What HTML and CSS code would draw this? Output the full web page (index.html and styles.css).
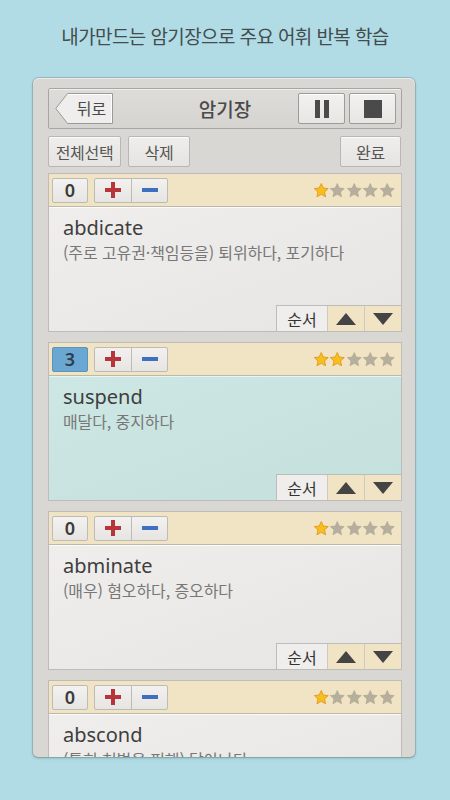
FILE: index.html
```html
<!DOCTYPE html>
<html lang="ko">
<head>
<meta charset="utf-8">
<title>암기장</title>
<link rel="stylesheet" href="styles.css">
</head>
<body>
<div class="screen">
  <h1 class="headline">내가만드는 암기장으로 주요 어휘 반복 학습</h1>
  <div class="panel">
    <div class="topbar">
      <button class="back">
        <svg class="back-shape" viewBox="0 0 58 31" preserveAspectRatio="none"><path d="M12.5 0.5H57.5V30.5H12.5L0.8 15.5Z" fill="#efeeec" stroke="#9a9a9a"/><path d="M13 1.5H56.5V29.5" fill="none" stroke="#ffffff" stroke-width="1"/></svg>
        <span class="back-label">뒤로</span>
      </button>
      <div class="topbar-title">암기장</div>
      <div class="controls">
        <button class="ctl"><svg width="16" height="20" viewBox="0 0 16 20"><rect x="1" y="1" width="5" height="18" fill="#4a4a4a"/><rect x="10" y="1" width="5" height="18" fill="#4a4a4a"/></svg></button>
        <button class="ctl"><svg width="18" height="18" viewBox="0 0 18 18"><rect x="0" y="0" width="18" height="18" fill="#4a4a4a"/></svg></button>
      </div>
    </div>
    <div class="toolbar">
      <button class="tbtn w-all">전체선택</button>
      <button class="tbtn w-del">삭제</button>
      <span class="spacer"></span>
      <button class="tbtn w-done">완료</button>
    </div>
    <div class="list">
      <div class="card">
        <div class="card-head">
          <div class="count">0</div>
          <div class="pm">
            <span class="pm-btn"><svg width="16" height="16" viewBox="0 0 16 16"><rect x="6" y="0" width="4" height="16" fill="#b7343a"/><rect x="0" y="6" width="16" height="4" fill="#b7343a"/></svg></span>
            <span class="pm-btn"><svg width="16" height="16" viewBox="0 0 16 16"><rect x="0" y="6" width="16" height="4" fill="#3f6fc0"/></svg></span>
          </div>
          <div class="stars">
            <svg class="star on" viewBox="0 0 24 24"><path d="M12 1.8l3 6.6 7.2.8-5.4 4.9 1.5 7.1L12 17.6l-6.3 3.6 1.5-7.1L1.8 9.2 9 8.4z"/></svg>
            <svg class="star" viewBox="0 0 24 24"><path d="M12 1.8l3 6.6 7.2.8-5.4 4.9 1.5 7.1L12 17.6l-6.3 3.6 1.5-7.1L1.8 9.2 9 8.4z"/></svg>
            <svg class="star" viewBox="0 0 24 24"><path d="M12 1.8l3 6.6 7.2.8-5.4 4.9 1.5 7.1L12 17.6l-6.3 3.6 1.5-7.1L1.8 9.2 9 8.4z"/></svg>
            <svg class="star" viewBox="0 0 24 24"><path d="M12 1.8l3 6.6 7.2.8-5.4 4.9 1.5 7.1L12 17.6l-6.3 3.6 1.5-7.1L1.8 9.2 9 8.4z"/></svg>
            <svg class="star" viewBox="0 0 24 24"><path d="M12 1.8l3 6.6 7.2.8-5.4 4.9 1.5 7.1L12 17.6l-6.3 3.6 1.5-7.1L1.8 9.2 9 8.4z"/></svg>
          </div>
        </div>
        <div class="card-body">
          <div class="word">abdicate</div>
          <div class="meaning">(주로 고유권·책임등을) 퇴위하다, 포기하다</div>
          <div class="order">
            <span class="order-label">순서</span>
            <span class="arrow"><svg width="20" height="12" viewBox="0 0 20 12"><path d="M10 0L20 12H0Z" fill="#444"/></svg></span>
            <span class="arrow"><svg width="20" height="12" viewBox="0 0 20 12"><path d="M0 0H20L10 12Z" fill="#444"/></svg></span>
          </div>
        </div>
      </div>

      <div class="card selected">
        <div class="card-head">
          <div class="count">3</div>
          <div class="pm">
            <span class="pm-btn"><svg width="16" height="16" viewBox="0 0 16 16"><rect x="6" y="0" width="4" height="16" fill="#b7343a"/><rect x="0" y="6" width="16" height="4" fill="#b7343a"/></svg></span>
            <span class="pm-btn"><svg width="16" height="16" viewBox="0 0 16 16"><rect x="0" y="6" width="16" height="4" fill="#3f6fc0"/></svg></span>
          </div>
          <div class="stars">
            <svg class="star on" viewBox="0 0 24 24"><path d="M12 1.8l3 6.6 7.2.8-5.4 4.9 1.5 7.1L12 17.6l-6.3 3.6 1.5-7.1L1.8 9.2 9 8.4z"/></svg>
            <svg class="star on" viewBox="0 0 24 24"><path d="M12 1.8l3 6.6 7.2.8-5.4 4.9 1.5 7.1L12 17.6l-6.3 3.6 1.5-7.1L1.8 9.2 9 8.4z"/></svg>
            <svg class="star" viewBox="0 0 24 24"><path d="M12 1.8l3 6.6 7.2.8-5.4 4.9 1.5 7.1L12 17.6l-6.3 3.6 1.5-7.1L1.8 9.2 9 8.4z"/></svg>
            <svg class="star" viewBox="0 0 24 24"><path d="M12 1.8l3 6.6 7.2.8-5.4 4.9 1.5 7.1L12 17.6l-6.3 3.6 1.5-7.1L1.8 9.2 9 8.4z"/></svg>
            <svg class="star" viewBox="0 0 24 24"><path d="M12 1.8l3 6.6 7.2.8-5.4 4.9 1.5 7.1L12 17.6l-6.3 3.6 1.5-7.1L1.8 9.2 9 8.4z"/></svg>
          </div>
        </div>
        <div class="card-body">
          <div class="word">suspend</div>
          <div class="meaning">매달다, 중지하다</div>
          <div class="order">
            <span class="order-label">순서</span>
            <span class="arrow"><svg width="20" height="12" viewBox="0 0 20 12"><path d="M10 0L20 12H0Z" fill="#444"/></svg></span>
            <span class="arrow"><svg width="20" height="12" viewBox="0 0 20 12"><path d="M0 0H20L10 12Z" fill="#444"/></svg></span>
          </div>
        </div>
      </div>

      <div class="card">
        <div class="card-head">
          <div class="count">0</div>
          <div class="pm">
            <span class="pm-btn"><svg width="16" height="16" viewBox="0 0 16 16"><rect x="6" y="0" width="4" height="16" fill="#b7343a"/><rect x="0" y="6" width="16" height="4" fill="#b7343a"/></svg></span>
            <span class="pm-btn"><svg width="16" height="16" viewBox="0 0 16 16"><rect x="0" y="6" width="16" height="4" fill="#3f6fc0"/></svg></span>
          </div>
          <div class="stars">
            <svg class="star on" viewBox="0 0 24 24"><path d="M12 1.8l3 6.6 7.2.8-5.4 4.9 1.5 7.1L12 17.6l-6.3 3.6 1.5-7.1L1.8 9.2 9 8.4z"/></svg>
            <svg class="star" viewBox="0 0 24 24"><path d="M12 1.8l3 6.6 7.2.8-5.4 4.9 1.5 7.1L12 17.6l-6.3 3.6 1.5-7.1L1.8 9.2 9 8.4z"/></svg>
            <svg class="star" viewBox="0 0 24 24"><path d="M12 1.8l3 6.6 7.2.8-5.4 4.9 1.5 7.1L12 17.6l-6.3 3.6 1.5-7.1L1.8 9.2 9 8.4z"/></svg>
            <svg class="star" viewBox="0 0 24 24"><path d="M12 1.8l3 6.6 7.2.8-5.4 4.9 1.5 7.1L12 17.6l-6.3 3.6 1.5-7.1L1.8 9.2 9 8.4z"/></svg>
            <svg class="star" viewBox="0 0 24 24"><path d="M12 1.8l3 6.6 7.2.8-5.4 4.9 1.5 7.1L12 17.6l-6.3 3.6 1.5-7.1L1.8 9.2 9 8.4z"/></svg>
          </div>
        </div>
        <div class="card-body">
          <div class="word">abminate</div>
          <div class="meaning">(매우) 혐오하다, 증오하다</div>
          <div class="order">
            <span class="order-label">순서</span>
            <span class="arrow"><svg width="20" height="12" viewBox="0 0 20 12"><path d="M10 0L20 12H0Z" fill="#444"/></svg></span>
            <span class="arrow"><svg width="20" height="12" viewBox="0 0 20 12"><path d="M0 0H20L10 12Z" fill="#444"/></svg></span>
          </div>
        </div>
      </div>

      <div class="card">
        <div class="card-head">
          <div class="count">0</div>
          <div class="pm">
            <span class="pm-btn"><svg width="16" height="16" viewBox="0 0 16 16"><rect x="6" y="0" width="4" height="16" fill="#b7343a"/><rect x="0" y="6" width="16" height="4" fill="#b7343a"/></svg></span>
            <span class="pm-btn"><svg width="16" height="16" viewBox="0 0 16 16"><rect x="0" y="6" width="16" height="4" fill="#3f6fc0"/></svg></span>
          </div>
          <div class="stars">
            <svg class="star on" viewBox="0 0 24 24"><path d="M12 1.8l3 6.6 7.2.8-5.4 4.9 1.5 7.1L12 17.6l-6.3 3.6 1.5-7.1L1.8 9.2 9 8.4z"/></svg>
            <svg class="star" viewBox="0 0 24 24"><path d="M12 1.8l3 6.6 7.2.8-5.4 4.9 1.5 7.1L12 17.6l-6.3 3.6 1.5-7.1L1.8 9.2 9 8.4z"/></svg>
            <svg class="star" viewBox="0 0 24 24"><path d="M12 1.8l3 6.6 7.2.8-5.4 4.9 1.5 7.1L12 17.6l-6.3 3.6 1.5-7.1L1.8 9.2 9 8.4z"/></svg>
            <svg class="star" viewBox="0 0 24 24"><path d="M12 1.8l3 6.6 7.2.8-5.4 4.9 1.5 7.1L12 17.6l-6.3 3.6 1.5-7.1L1.8 9.2 9 8.4z"/></svg>
            <svg class="star" viewBox="0 0 24 24"><path d="M12 1.8l3 6.6 7.2.8-5.4 4.9 1.5 7.1L12 17.6l-6.3 3.6 1.5-7.1L1.8 9.2 9 8.4z"/></svg>
          </div>
        </div>
        <div class="card-body">
          <div class="word">abscond</div>
          <div class="meaning">(특히 처벌을 피해) 달아나다</div>
          <div class="order">
            <span class="order-label">순서</span>
            <span class="arrow"><svg width="20" height="12" viewBox="0 0 20 12"><path d="M10 0L20 12H0Z" fill="#444"/></svg></span>
            <span class="arrow"><svg width="20" height="12" viewBox="0 0 20 12"><path d="M0 0H20L10 12Z" fill="#444"/></svg></span>
          </div>
        </div>
      </div>
    </div>
  </div>
</div>
</body>
</html>
```

FILE: styles.css
```css
* { box-sizing: border-box; }
html, body {
  margin: 0;
  padding: 0;
  background: #b1dce5;
  font-family: "Noto Sans", "Noto Sans CJK KR", sans-serif;
}
.screen {
  width: 450px;
  height: 800px;
  overflow: hidden;
}
.headline {
  margin: 0;
  height: 78px;
  padding-top: 22px;
  text-align: center;
  font-family: "Noto Sans CJK KR", sans-serif;
  font-weight: 400;
  font-size: 19px;
  line-height: 28px;
  color: #434c4f;
  letter-spacing: -0.6px;
}
.panel {
  margin-left: 33px;
  width: 382px;
  height: 679px;
  padding: 10px 13px 0 15px;
  background: #d9d7d3;
  border-radius: 6px 6px 5px 5px;
  box-shadow: 0 0 0 1px rgba(120,130,130,0.35), 0 1px 3px rgba(0,0,0,0.25), inset 0 1px 0 #ecebe8;
  overflow: hidden;
}
button {
  font-family: "Noto Sans CJK KR", sans-serif;
  cursor: pointer;
  padding: 0;
  margin: 0;
}
.topbar {
  height: 41px;
  display: flex;
  align-items: center;
  padding: 0 5px 0 6px;
  background: linear-gradient(#dedcd8, #d6d4d0);
  border: 1px solid #a7a6a3;
  box-shadow: inset 0 1px 0 #f0efec;
  border-radius: 2px;
}
.back {
  position: relative;
  width: 58px;
  height: 31px;
  border: none;
  background: transparent;
  flex: none;
}
.back-shape {
  position: absolute;
  left: 0;
  top: 0;
  width: 58px;
  height: 31px;
}
.back-label {
  position: relative;
  display: block;
  padding-left: 15px;
  font-size: 16px;
  line-height: 31px;
  color: #4a4a4a;
}
.topbar-title {
  flex: 1;
  text-align: center;
  font-family: "Noto Sans CJK KR", sans-serif;
  font-size: 19px;
  font-weight: 500;
  color: #4a4a4a;
  padding-left: 39px;
}
.controls {
  display: flex;
  gap: 4px;
}
.ctl {
  width: 47px;
  height: 31px;
  display: flex;
  align-items: center;
  justify-content: center;
  background: linear-gradient(#f2f1ef, #e7e6e3);
  border: 1px solid #9c9b98;
  border-radius: 2px;
  box-shadow: inset 0 1px 0 #fff;
}
.toolbar {
  margin-top: 7px;
  height: 31px;
  display: flex;
  gap: 7px;
  padding-right: 1px;
}
.spacer { flex: 1; }
.tbtn {
  height: 31px;
  font-size: 16px;
  color: #555;
  background: linear-gradient(#efeeec, #e5e4e1);
  border: 1px solid #b8b7b3;
  border-radius: 2px;
  box-shadow: inset 0 1px 0 #fbfbfa;
  letter-spacing: -0.3px;
}
.w-all { width: 73px; }
.w-del { width: 62px; }
.w-done { width: 61px; }
.list {
  margin-top: 6px;
  display: flex;
  flex-direction: column;
  gap: 10px;
}
.card {
  height: 159px;
  flex: none;
  border: 1px solid #bdbcb8;
  display: flex;
  flex-direction: column;
  background: #e9e8e6;
}
.card-head {
  height: 33px;
  flex: none;
  display: flex;
  align-items: center;
  padding: 0 6px 0 3px;
  background: #f1e4c4;
  border-bottom: 1px solid #bdb8ac;
}
.count {
  width: 36px;
  height: 25px;
  display: flex;
  align-items: center;
  justify-content: center;
  font-family: "Noto Sans", sans-serif;
  font-size: 18px;
  font-weight: 600;
  color: #3b3b3b;
  background: linear-gradient(#f3f2f0, #e6e5e2);
  border: 1px solid #bcbbb7;
  border-radius: 2px;
}
.selected .count {
  background: #6aa7d2;
  border-color: #5b93bb;
  color: #2f3d4a;
}
.pm {
  margin-left: 6px;
  display: flex;
  height: 25px;
  border: 1px solid #bcbbb7;
  border-radius: 2px;
  background: linear-gradient(#f2f1ef, #e6e5e2);
}
.pm-btn {
  width: 36px;
  display: flex;
  align-items: center;
  justify-content: center;
}
.pm-btn + .pm-btn { border-left: 1px solid #bcbbb7; }
.stars {
  margin-left: auto;
  display: flex;
  gap: 0;
}
.star {
  width: 16.5px;
  height: 17px;
  fill: #b7af9d;
  stroke: #a8a08d;
  stroke-width: 0.8;
}
.star.on {
  fill: #f6bf1f;
  stroke: #e2931a;
  stroke-width: 1.2;
}
.card-body {
  flex: 1;
  position: relative;
  display: flex;
  flex-direction: column;
  padding: 7px 14px 0;
  background: linear-gradient(160deg, #efeeec, #e6e5e3);
  box-shadow: inset 0 1px 0 #fbfbfa;
}
.selected .card-body {
  background: linear-gradient(160deg, #cde7e4, #c4e0dc);
  box-shadow: inset 0 1px 0 #e6f4f2;
}
.word {
  font-family: "Noto Sans", sans-serif;
  font-size: 20px;
  line-height: 28px;
  color: #3e3e3e;
}
.meaning {
  font-family: "Noto Sans CJK KR", sans-serif;
  font-size: 16px;
  line-height: 21px;
  color: #777;
  letter-spacing: -0.1px;
}
.order {
  margin-top: auto;
  align-self: flex-end;
  margin-right: -14px;
  display: flex;
  height: 26px;
  border-top: 1px solid #bdbcb8;
}
.order-label {
  width: 51px;
  display: flex;
  align-items: center;
  justify-content: center;
  font-family: "Noto Sans CJK KR", sans-serif;
  font-size: 16px;
  color: #333;
  background: #efeeec;
  border-left: 1px solid #bdbcb8;
}
.arrow {
  width: 37px;
  display: flex;
  align-items: center;
  justify-content: center;
  background: #f1e4c4;
  border-left: 1px solid #cfcac0;
}
```
